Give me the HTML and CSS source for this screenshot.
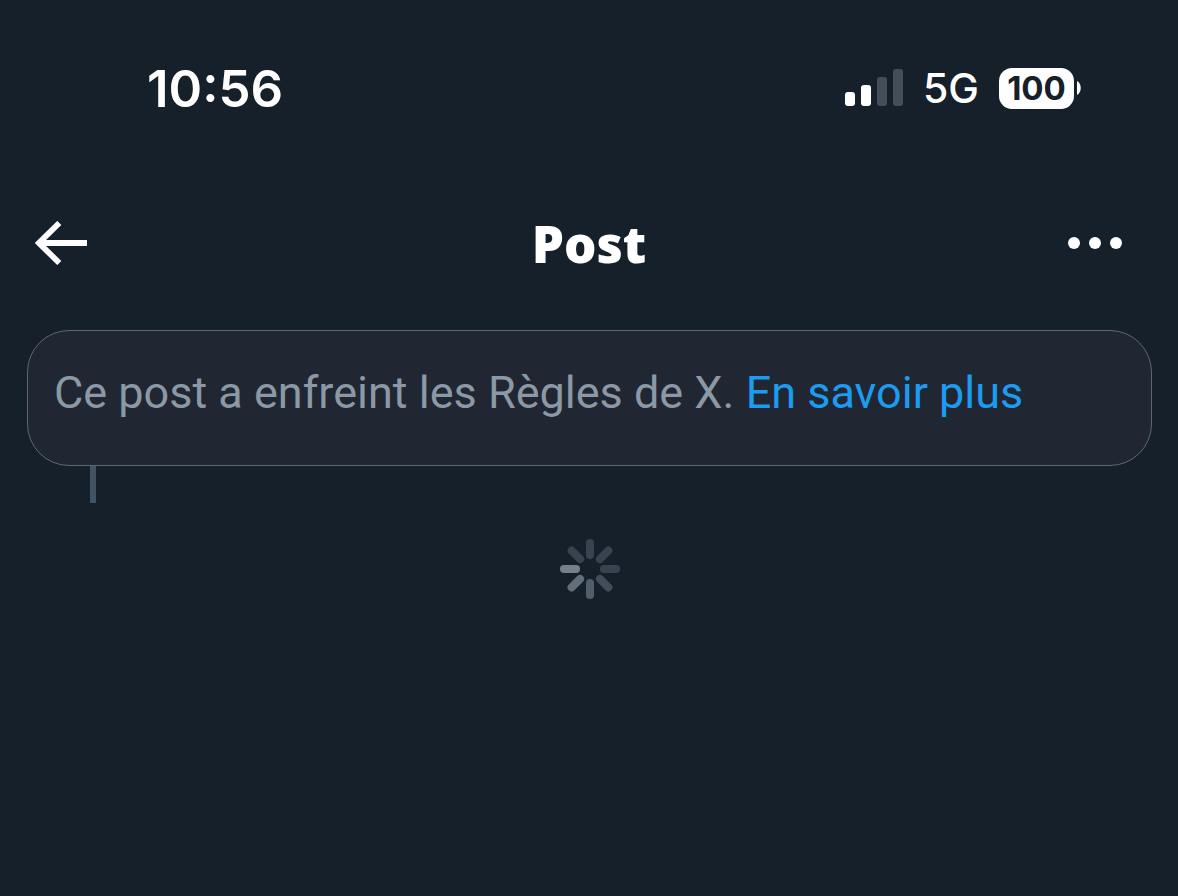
FILE: index.html
```html
<!DOCTYPE html>
<html lang="fr">
<head>
    <meta charset="UTF-8">
    <meta name="viewport" content="width=device-width, initial-scale=1.0">
    <title>Post</title>
    <link rel="stylesheet" href="styles.css">
</head>
<body>
    <div class="status-bar">
        <span class="time">10:56</span>
        <div class="status-icons">
            <svg class="signal" width="58" height="38" viewBox="0 0 58 38" aria-hidden="true">
                <rect x="0" y="23" width="10" height="14" rx="3" fill="#fff"/>
                <rect x="16" y="16" width="10" height="21" rx="3" fill="#fff"/>
                <rect x="32" y="8" width="10" height="29" rx="3" fill="#444e58"/>
                <rect x="48" y="0" width="10" height="37" rx="3" fill="#444e58"/>
            </svg>
            <span class="network">5G</span>
            <div class="battery">
                <span class="battery-level">100</span>
                <svg width="4" height="14" viewBox="0 0 4 14" aria-hidden="true">
                    <path d="M0 0C5 3 5 11 0 14z" fill="#fff"/>
                </svg>
            </div>
        </div>
    </div>

    <header class="header">
        <button type="button" class="icon-btn" aria-label="Retour">
            <svg width="52" height="44" viewBox="0 0 52 44" aria-hidden="true">
                <path d="M24.3 2L3.9 22L24.3 42" fill="none" stroke="#fff" stroke-width="5.8"/>
                <path d="M4 22H52" stroke="#fff" stroke-width="6"/>
            </svg>
        </button>
        <h1 class="title">Post</h1>
        <button type="button" class="icon-btn more" aria-label="Plus">
            <svg width="54" height="14" viewBox="0 0 54 14" aria-hidden="true">
                <circle cx="6" cy="7" r="6" fill="#fff"/>
                <circle cx="27" cy="7" r="6" fill="#fff"/>
                <circle cx="48" cy="7" r="6" fill="#fff"/>
            </svg>
        </button>
    </header>

    <main class="thread">
        <p class="notice">Ce post a enfreint les Règles de X. <a href="#">En savoir plus</a></p>
        <div class="thread-line"></div>
        <svg class="spinner" width="60" height="60" viewBox="-30 -30 60 60" role="img" aria-label="Chargement">
            <g stroke-width="8" stroke-linecap="round">
                <path d="M0 -14V-26" stroke="#39434f"/>
                <path d="M0 -14V-26" stroke="#39434f" transform="rotate(45)"/>
                <path d="M0 -14V-26" stroke="#39434f" transform="rotate(90)"/>
                <path d="M0 -14V-26" stroke="#434d59" transform="rotate(135)"/>
                <path d="M0 -14V-26" stroke="#525d6a" transform="rotate(180)"/>
                <path d="M0 -14V-26" stroke="#646e7a" transform="rotate(225)"/>
                <path d="M0 -14V-26" stroke="#76808a" transform="rotate(270)"/>
                <path d="M0 -14V-26" stroke="#39434f" transform="rotate(315)"/>
            </g>
        </svg>
    </main>
</body>
</html>
```

FILE: styles.css
```css
body {
    margin: 0;
    background-color: #16202a;
    color: #fff;
    font-family: Roboto, sans-serif;
}
.status-bar {
    display: flex;
    justify-content: space-between;
    align-items: center;
    height: 176px;
    padding: 0 97px 0 147px;
    font-family: Inter, sans-serif;
}
.time {
    font-size: 51px;
    font-weight: 600;
}
.status-icons {
    display: flex;
    align-items: center;
    gap: 20px;
}
.network {
    font-size: 41px;
    font-weight: 500;
}
.battery {
    display: flex;
    align-items: center;
    gap: 3px;
}
.battery-level {
    width: 75px;
    border-radius: 13px;
    background-color: #fff;
    color: #16202a;
    font-size: 33px;
    font-weight: 700;
    line-height: 41px;
    text-align: center;
}
.header {
    display: grid;
    grid-template-columns: 1fr auto 1fr;
    align-items: center;
    height: 134px;
    padding: 0 35px;
}
.icon-btn {
    display: flex;
    justify-self: start;
    padding: 0;
    border: none;
    background: none;
    cursor: pointer;
}
.more {
    justify-self: end;
    padding-right: 21px;
}
.title {
    margin: 0;
    font-family: "Open Sans", sans-serif;
    font-size: 51px;
    font-weight: 800;
    line-height: 60px;
}
.thread {
    display: flex;
    flex-direction: column;
    padding: 20px 26px 0 27px;
}
.notice {
    margin: 0;
    padding: 32px 26px 42px;
    border: 1px solid #5b6873;
    border-radius: 42px;
    background-color: #202732;
    color: #8b98a5;
    font-size: 45px;
    line-height: 60px;
}
.notice a {
    color: #1d9bf0;
    text-decoration: none;
}
.thread-line {
    width: 6px;
    height: 37px;
    margin-left: 63px;
    background-color: #425364;
}
.spinner {
    align-self: center;
    margin-top: 36px;
}
```
